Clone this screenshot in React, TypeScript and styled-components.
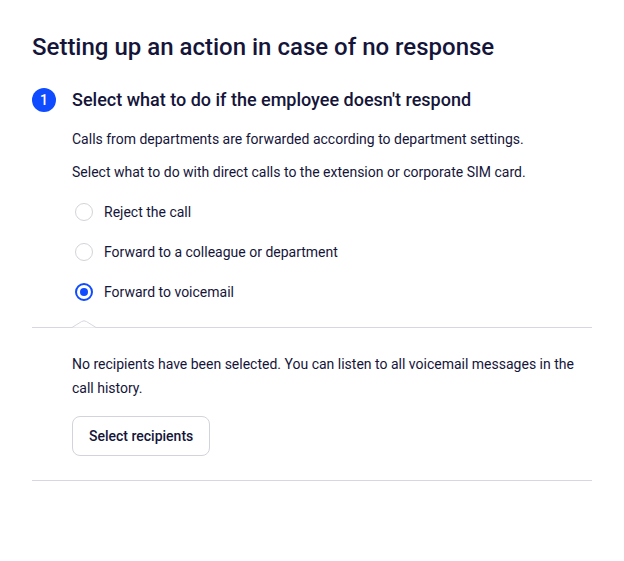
import styled, { createGlobalStyle } from 'styled-components';

const GlobalStyle = createGlobalStyle`
  html, body {
    margin: 0;
    padding: 0;
    background: #ffffff;
  }
  body {
    font-family: Roboto, "Liberation Sans", sans-serif;
    color: #15153a;
    -webkit-font-smoothing: antialiased;
  }
`;

const options = [
  { id: 'reject', label: 'Reject the call' },
  { id: 'forward', label: 'Forward to a colleague or department' },
  { id: 'voicemail', label: 'Forward to voicemail' },
];

function App() {
  const selected = 'voicemail';
  return (
    <>
      <GlobalStyle />
      <Page>
        <Title>Setting up an action in case of no response</Title>
        <StepHeader>
          <StepBadge>1</StepBadge>
          <StepTitle>Select what to do if the employee doesn't respond</StepTitle>
        </StepHeader>
        <StepBody>
          <Text>Calls from departments are forwarded according to department settings.</Text>
          <Text $top={11}>Select what to do with direct calls to the extension or corporate SIM card.</Text>
          <RadioList>
            {options.map((o) => (
              <RadioRow key={o.id}>
                <RadioCircle $checked={o.id === selected} />
                <RadioLabel>{o.label}</RadioLabel>
              </RadioRow>
            ))}
          </RadioList>
        </StepBody>
        <Panel>
          <Caret width='24' height='8' viewBox='0 0 24 8'>
            <path d='M0 7.5 L9.5 1.6 Q12 0 14.5 1.6 L24 7.5' fill='#ffffff' stroke='#d7d7df' strokeWidth='1' />
          </Caret>
          <PanelBody>
            <Note>
              No recipients have been selected. You can listen to all voicemail messages in the call history.
            </Note>
            <Button>Select recipients</Button>
          </PanelBody>
        </Panel>
      </Page>
    </>
  );
}

export default App;

const Page = styled.div`
  padding: 31px 32px 32px;
`;

const Title = styled.h1`
  margin: 0;
  font-size: 24px;
  line-height: 32px;
  font-weight: 500;
  letter-spacing: 0;
`;

const StepHeader = styled.div`
  display: flex;
  align-items: center;
  gap: 16px;
  margin-top: 25px;
  height: 24px;
`;

const StepBadge = styled.div`
  width: 24px;
  height: 24px;
  border-radius: 50%;
  background: #0f4cff;
  color: #ffffff;
  font-size: 14px;
  font-weight: 500;
  display: flex;
  align-items: center;
  justify-content: center;
`;

const StepTitle = styled.h2`
  margin: 0;
  font-size: 18px;
  line-height: 24px;
  font-weight: 500;
`;

const StepBody = styled.div`
  padding-left: 40px;
  padding-top: 16px;
`;

const Text = styled.p<{ $top?: number }>`
  margin: ${(p) => p.$top ?? 0}px 0 0;
  font-size: 14px;
  line-height: 22px;
`;

const RadioList = styled.div`
  display: flex;
  flex-direction: column;
  margin-top: 9px;
  padding-bottom: 15px;
`;

const RadioRow = styled.label`
  display: flex;
  align-items: center;
  gap: 11px;
  height: 40px;
  padding-left: 3px;
  font-size: 14px;
  cursor: pointer;
`;

const RadioCircle = styled.span<{ $checked: boolean }>`
  box-sizing: border-box;
  width: 18px;
  height: 18px;
  border-radius: 50%;
  border: ${(p) => (p.$checked ? '2px solid #0f4cff' : '1px solid #d3d3db')};
  display: flex;
  align-items: center;
  justify-content: center;
  &::after {
    content: '';
    display: ${(p) => (p.$checked ? 'block' : 'none')};
    width: 8px;
    height: 8px;
    border-radius: 50%;
    background: #0f4cff;
  }
`;

const RadioLabel = styled.span`
  line-height: 20px;
`;

const Panel = styled.div`
  position: relative;
  border-top: 1px solid #d7d7df;
  border-bottom: 1px solid #d7d7df;
`;

const Caret = styled.svg`
  position: absolute;
  left: 40px;
  top: -8px;
  display: block;
`;

const PanelBody = styled.div`
  padding: 24px 0 24px 40px;
  display: flex;
  flex-direction: column;
  align-items: flex-start;
  gap: 16px;
`;

const Note = styled.p`
  margin: 0;
  font-size: 14px;
  line-height: 24px;
  padding-right: 10px;
`;

const Button = styled.button`
  box-sizing: border-box;
  height: 40px;
  padding: 0 16px;
  border: 1px solid #d3d3db;
  border-radius: 8px;
  background: #ffffff;
  color: #15153a;
  font-family: Roboto, "Liberation Sans", sans-serif;
  font-size: 14px;
  font-weight: 500;
  cursor: pointer;
`;
